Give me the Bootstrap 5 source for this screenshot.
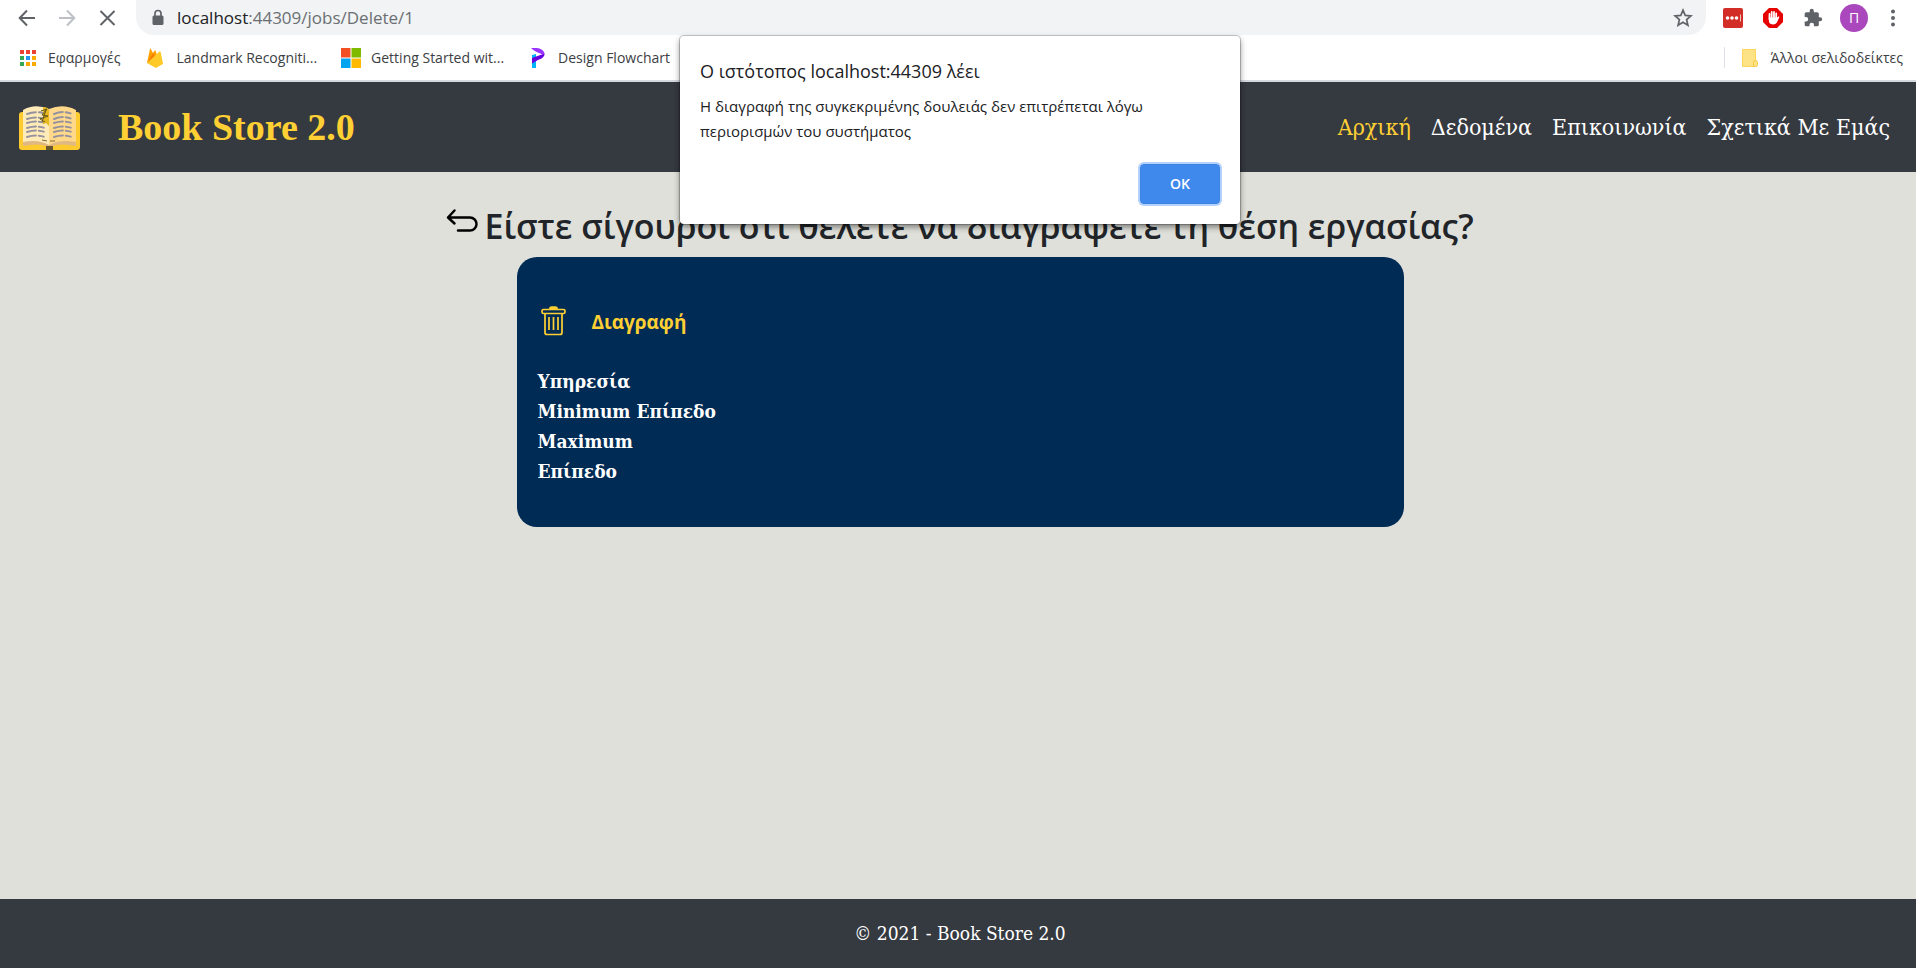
<!DOCTYPE html>
<html lang="el">
<head>
<meta charset="utf-8">
<meta name="viewport" content="width=device-width, initial-scale=1">
<title>Book Store 2.0</title>
<link href="https://cdn.jsdelivr.net/npm/bootstrap@5.3.0/dist/css/bootstrap.min.css" rel="stylesheet">
<style>
:root { --slab: "Roboto Slab", "DejaVu Serif Condensed", "DejaVu Serif", serif; --ui: "Open Sans", "Noto Sans", sans-serif; --gold: #ffd033; --slate: #353940; }
body { background: #dfe0da; font-family: var(--slab); color: #212529; }
.chrome { background: #fff; font-family: var(--ui); border-bottom: 2px solid #d5d9de; }
.toolbar { height: 35px; padding-left: 16px; padding-right: 12px; }
.tool { border: 0; background: none; padding: 0; line-height: 0; width: 22px; margin-right: 18px; }
.omnibox { background: #f1f3f4; height: 35px; border-radius: 0 0 18px 18px; padding: 0 12px 0 15px; font-size: 17px; color: #202124; }
.omnibox input { border: 0; background: none; padding: 0; color: #6b6f73; outline: 0; min-width: 0; }
.omnibox svg { flex: none; }
.lock { margin-right: 12px; }
.avatar { width: 28px; height: 28px; border: 0; border-radius: 50%; background: #ab47bc; color: #fff; font-size: 14px; line-height: 26px; padding: 0; margin: 0 14px 0 -2px; }
.bookmarks { height: 45px; font-size: 14px; padding: 0 13px 0 18px; }
.bookmarks a { color: #3c4043; text-decoration: none; white-space: nowrap; gap: 10px; }
.bookmark-list { gap: 24px; }
.site-nav { background: var(--slate); min-height: 90px; padding: 0 18px; }
.site-nav .navbar-brand { font: bold 38px/48px "Liberation Serif", serif; color: var(--gold); gap: 37px; padding: 0; }
.site-nav .navbar-nav { gap: 20px; padding-right: 8px; }
.site-nav .navbar-nav .nav-link { font-size: 23px; line-height: 32px; color: #fff; padding: 8px 0; }
.site-nav .navbar-nav .nav-link.active { color: var(--gold); }
.page { padding: 32px 16px 24px 20px; }
.question-row { padding-bottom: 9px; }
.question { font: 600 34px/44px var(--ui); }
.job { background: #002b54; border-radius: 20px; max-width: 887px; padding: 49px 21px 41px; color: #fff; font-size: 19px; line-height: 30px; font-weight: 700; }
.job h2 { font: 700 19px/32px var(--ui); color: var(--gold); }
.site-foot { background: var(--slate); color: #fff; font-size: 19px; line-height: 29px; padding: 20px 0 20px 4px; }
.alert-layer { top: 36px; padding-left: 4px; pointer-events: none; z-index: 5; }
.dialog { pointer-events: auto; width: 560px; background: #fff; border-radius: 4px; padding: 20px; box-shadow: 0 0 0 1px #0003, 0 3px 6px #0007; font-family: var(--ui); color: #202124; }
.dialog h1 { font-size: 18px; line-height: 30px; }
.dialog p { font-size: 15px; line-height: 25px; margin-bottom: 20px; }
.ok-btn { background: #4089ec; border: 1px solid #3b82e6; color: #fff; font-size: 14px; font-weight: 600; line-height: 20px; width: 80px; height: 40px; border-radius: 4px; box-shadow: 0 0 0 2px #b3d1fb; }
</style>
</head>
<body class="min-vh-100 d-flex flex-column position-relative">
<header class="chrome">
  <div class="toolbar d-flex align-items-center">
    <button class="tool" aria-label="Πίσω"><svg width="22" height="22" viewBox="0 0 22 22" fill="none" stroke="#5f6368" stroke-width="2"><path d="M19 11H4M11 3.500 3.700 11 11 18.500"/></svg></button>
    <button class="tool" aria-label="Εμπρός"><svg width="22" height="22" viewBox="0 0 22 22" fill="none" stroke="#bdc1c6" stroke-width="2"><path d="M3 11h15M11 3.500 18.300 11 11 18.500"/></svg></button>
    <button class="tool" aria-label="Διακοπή"><svg width="22" height="22" viewBox="0 0 22 22" fill="none" stroke="#5f6368" stroke-width="2"><path d="m4.500 4 14 14m0-14-14 14"/></svg></button>
    <div class="omnibox flex-grow-1 d-flex align-items-center">
      <svg class="lock" width="14" height="18" viewBox="0 0 14 18"><rect x="1.500" y="6.500" width="11" height="9.500" rx="1.500" fill="#5f6368"/><path d="M4 7V4.500a3 3 0 0 1 6 0V7" fill="none" stroke="#5f6368" stroke-width="1.700"/></svg>
      <label for="url">localhost</label><input id="url" class="flex-grow-1" value=":44309/jobs/Delete/1">
      <button class="tool m-0" aria-label="Σελιδοδείκτης"><svg width="20" height="20" viewBox="0 0 20 20" fill="none" stroke="#5f6368" stroke-width="1.700"><path d="m10 2.200 2.200 5.200 5.700.5-4.300 3.700 1.300 5.600L10 14.200l-4.900 3 1.300-5.600L2.100 7.900l5.700-.5z"/></svg></button>
    </div>
    <div class="d-flex align-items-center ms-3">
      <button class="tool" aria-label="Κωδικοί"><svg width="22" height="20" viewBox="0 0 22 20"><rect x="1" width="20" height="20" rx="2" fill="#d32d27"/><circle cx="5.500" cy="10" r="1.800" fill="#fff"/><circle cx="10" cy="10" r="1.800" fill="#fff"/><circle cx="14.500" cy="10" r="1.800" fill="#fff"/><path d="M18.500 6.500v7" stroke="#fff" stroke-opacity=".7"/></svg></button>
      <button class="tool" aria-label="Αποκλεισμός"><svg width="22" height="22" viewBox="0 0 22 22"><path d="M7 1h8l6 6v8l-6 6H7l-6-6V7z" fill="#e60000"/><path d="M7.500 12V7M9.700 11V5M12 11V4.800M14.200 11V6.500" stroke="#fff" stroke-width="1.800" stroke-linecap="round"/><path d="M6.600 10.500h8.500l1.200-1c1-.4 1.300.3.900 1L14.900 15.500c-1.500 2.600-6.500 2.600-7.800-.3z" fill="#fff"/></svg></button>
      <button class="tool" aria-label="Επεκτάσεις"><svg width="20" height="20" viewBox="0 0 24 24" fill="#5f6368"><path d="M20.500 11H19V7a2 2 0 0 0-2-2h-4V3.500a2.500 2.500 0 0 0-5 0V5H4a2 2 0 0 0-2 2v3.800h1.500a2.700 2.700 0 0 1 0 5.400H2V20a2 2 0 0 0 2 2h3.800v-1.500a2.700 2.700 0 0 1 5.400 0V22H17a2 2 0 0 0 2-2v-4h1.500a2.500 2.500 0 0 0 0-5z"/></svg></button>
      <button class="avatar">Π</button>
      <button class="tool m-0" aria-label="Μενού"><svg width="20" height="20" viewBox="0 0 20 20" fill="#5f6368"><circle cx="10" cy="3.500" r="2"/><circle cx="10" cy="10" r="2"/><circle cx="10" cy="16.500" r="2"/></svg></button>
    </div>
  </div>
  <nav class="bookmarks d-flex align-items-center justify-content-between" aria-label="Σελιδοδείκτες">
    <div class="bookmark-list d-flex align-items-center">
      <a href="#" class="d-flex align-items-center"><svg width="20" height="20" viewBox="0 0 20 20"><path fill="#ea4335" d="M2 2h4v4H2zM8 2h4v4H8zM14 2h4v4h-4z"/><path fill="#34a853" d="M2 8h4v4H2zM2 14h4v4H2z"/><path fill="#2196f3" d="M8 8h4v4H8z"/><path fill="#fbab00" d="M14 8h4v4h-4zM8 14h4v4H8zM14 14h4v4h-4z"/></svg>Εφαρμογές</a>
      <a href="#" class="d-flex align-items-center"><svg width="22" height="20" viewBox="0 0 22 20"><path fill="#ffa000" d="M3 15 6 .800c.1-.5.500-.5.700-.1L9 5l2.200-3 1 2.500L15 15z"/><path fill="#f57c00" d="M3 15 9.300 5l2 4z"/><path fill="#ffca28" d="m3 15 12.500-11.500c.5-.4 1 0 1.200.5L19 16l-7.200 4z"/></svg>Landmark Recogniti...</a>
      <a href="#" class="d-flex align-items-center"><svg width="20" height="20" viewBox="0 0 20 20"><path fill="#f25022" d="M0 0h9.500v9.500H0z"/><path fill="#7fba00" d="M10.500 0H20v9.500h-9.500z"/><path fill="#00a4ef" d="M0 10.500h9.500V20H0z"/><path fill="#ffb900" d="M10.500 10.500H20V20h-9.500z"/></svg>Getting Started wit...</a>
      <a href="#" class="d-flex align-items-center"><svg width="20" height="20" viewBox="0 0 20 20"><path fill="#00b5f5" d="M4 7l4-1v14H4z"/><path fill="#9933ff" d="M3 0h4c5 0 9 2 9.500 5.500C14 7 12 5 11 5 9 4 6 3 3 0z"/><path fill="#6a00e0" d="M4 10 16.500 5.500C17 9 13 11 10 12l-6 3.500z"/></svg>Design Flowchart</a>
    </div>
    <a href="#" class="d-flex align-items-center border-start ps-3"><svg width="20" height="20" viewBox="0 0 20 20"><path fill="#fee286" stroke="#fcd55a" d="M1.500 1.500h13v17h-13z"/><path fill="#fee286" stroke="#f5c842" d="M12.500 18.500v-4a2 2 0 0 1 4 0v2a2 2 0 0 1-2 2z"/></svg>Άλλοι σελιδοδείκτες</a>
  </nav>
</header>

<nav class="site-nav navbar navbar-expand">
  <a class="navbar-brand d-flex align-items-center m-0" href="#">
    <svg width="63" height="48" viewBox="0 0 63 48"><rect x="1" y="9" width="61" height="38" rx="3" fill="#fdcb2f"/><path fill="#67562d" d="M28 43h7v4h-7z"/><path fill="#dfb883" d="M5 38q16-4 26 4 11-8 27-4v5q-16-3-23 0h-7q-7-3-23 0z"/><path fill="#ffebb8" d="M5 7q12-7 26-1v36q-10-6-26-3z"/><path fill="#ffd88a" d="M58 7q-13-7-27-1v36q11-6 27-3z"/><g fill="none" stroke="#9592a0" stroke-width="2" stroke-linecap="round" stroke-dasharray="9 3 5 3"><path d="M9 11q9-3 16-1M9 16q9-3 18 0M9 20q9-3 18 0M9 25q9-3 18 0M9 29q9-3 18 0M9 34q9-3 18 0M36 11q9-4 18 0M36 16q9-4 18 0M36 20q9-3 18 0M36 25q9-3 18 0M36 29q9-3 18 0M36 34q9-3 18 0"/></g><path fill="#e7b91e" d="M25 4q5 0 6 3v16l-3-3-3 1z"/><path d="m23 8 6-2-5 6 6 1-8 3 5 3m1-12-4 12" fill="none" stroke="#66551a"/><path d="M24 37l5 1M32 38h5" stroke="#826933"/></svg>
    Book Store 2.0
  </a>
  <ul class="navbar-nav ms-auto">
    <li class="nav-item"><a class="nav-link active" href="#">Αρχική</a></li>
    <li class="nav-item"><a class="nav-link" href="#">Δεδομένα</a></li>
    <li class="nav-item"><a class="nav-link" href="#">Επικοινωνία</a></li>
    <li class="nav-item"><a class="nav-link" href="#">Σχετικά Με Εμάς</a></li>
  </ul>
</nav>

<main class="page flex-grow-1">
  <div class="question-row d-flex justify-content-center">
    <a href="#" class="me-1 mt-1" aria-label="Επιστροφή"><svg width="34" height="34" viewBox="0 0 34 34" fill="none" stroke="#000" stroke-width="2.500" stroke-linecap="round" stroke-linejoin="round"><path d="M8.500 2.500 2 9.500l6.500 6M2 9.500h22a6.500 6.500 0 0 1 0 13H12"/></svg></a>
    <h1 class="question m-0">Είστε σίγουροι ότι θέλετε να διαγράψετε τη θέση εργασίας?</h1>
  </div>
  <section class="job mx-auto">
    <div class="d-flex align-items-center mb-4 pb-1">
      <svg class="me-4" width="30" height="32" viewBox="0 0 30 32" fill="none" stroke="#ffd033" stroke-width="1.700"><rect x="4" y="3.500" width="23" height="4" rx="1.500"/><path d="M12 2.500Q12 1 14 1h3q2 0 2 1.500z" fill="#ffd033"/><path d="M7 8v18.500q0 2 2 2h13q2 0 2-2V8M11 11v13M15.500 11v13M20 11v13"/></svg>
      <h2 class="m-0">Διαγραφή</h2>
    </div>
    <dl class="m-0">
      <dt>Υπηρεσία</dt>
      <dt>Minimum Επίπεδο</dt>
      <dt>Maximum<br>Επίπεδο</dt>
    </dl>
  </section>
</main>

<footer class="site-foot text-center">© 2021 - Book Store 2.0</footer>

<div class="alert-layer position-absolute start-0 end-0 d-flex justify-content-center">
  <div class="dialog" role="alertdialog" aria-labelledby="dlgTitle">
    <h1 id="dlgTitle" class="fw-normal mb-2">Ο ιστότοπος localhost:44309 λέει</h1>
    <p>Η διαγραφή της συγκεκριμένης δουλειάς δεν επιτρέπεται λόγω περιορισμών του συστήματος</p>
    <div class="text-end"><button class="ok-btn">OK</button></div>
  </div>
</div>
<script src="https://cdn.jsdelivr.net/npm/bootstrap@5.3.0/dist/js/bootstrap.bundle.min.js"></script>
</body>
</html>
